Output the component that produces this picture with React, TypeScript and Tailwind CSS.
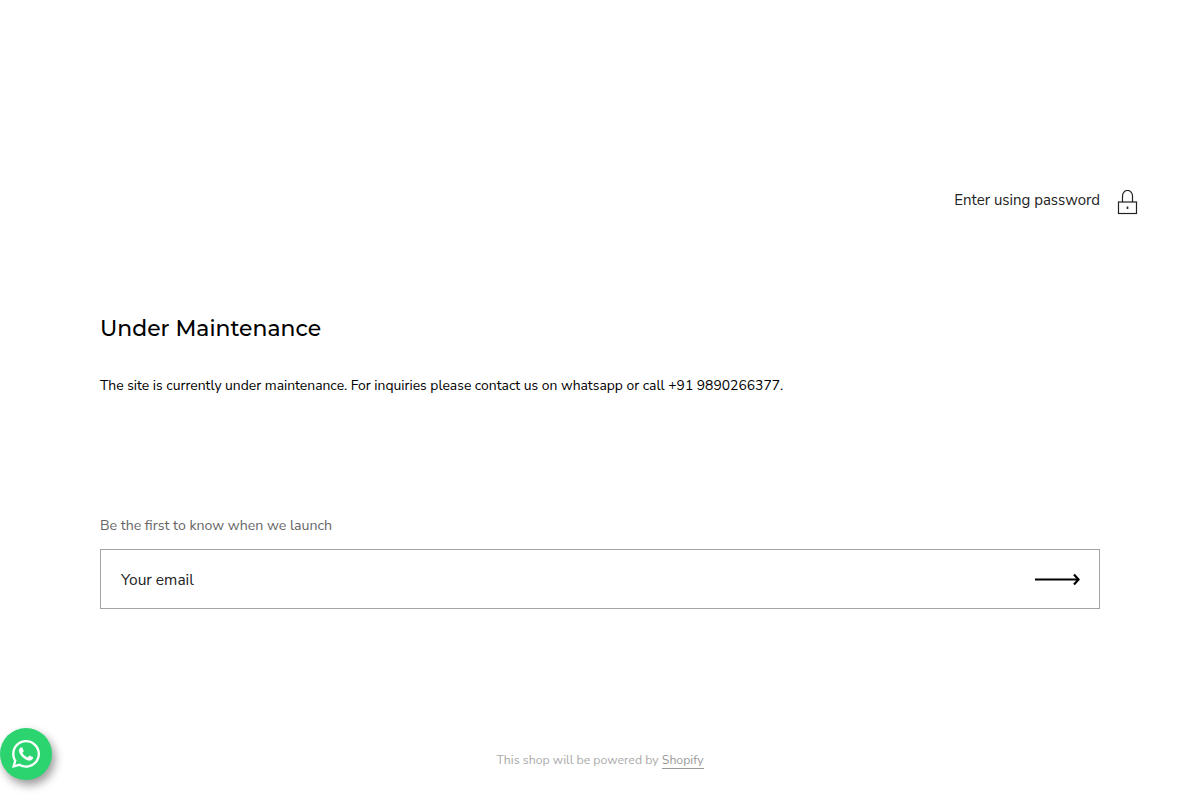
import { FaWhatsapp } from 'react-icons/fa';

const bodyFont = "font-['Nunito_Sans','Lato','Open_Sans',sans-serif]";

function LockIcon() {
  return (
    <svg className="h-[25px] w-[21px] text-[#222]" viewBox="0 0 21 25" fill="none" stroke="currentColor" strokeWidth="1.2">
      <path d="M5.5 12V6a5 5.5 0 0 1 10 0v6" />
      <rect x="1.5" y="12" width="18" height="11.5" />
      <path d="M10.5 16.5v2.5" strokeWidth="1.6" />
    </svg>
  );
}

function ArrowIcon() {
  return (
    <svg className="h-[13px] w-[46px] text-black" viewBox="0 0 46 13" fill="none" stroke="currentColor">
      <path d="M1 6.5h43" strokeWidth="2" />
      <path d="M40 1.5l4.5 5-4.5 5" strokeWidth="2.2" />
    </svg>
  );
}

export default function App() {
  return (
    <div className={`relative flex h-[800px] w-full flex-col overflow-hidden bg-white text-black ${bodyFont}`}>
      {/* Password link */}
      <div className="mt-[190px] flex items-start justify-end gap-[17px] pr-[62px]">
        <span className="text-[15px] leading-[21px] text-[#222]">Enter using password</span>
        <LockIcon />
      </div>

      {/* Message */}
      <div className="mt-[97px] px-[100px]">
        <h1 className="font-['Montserrat','Inter',sans-serif] text-[21.9px] leading-[32px] font-medium">Under Maintenance</h1>
        <p className="mt-[31px] text-[13.88px] leading-[21px]">
          The site is currently under maintenance. For inquiries please contact us on whatsapp or call +91 9890266377.
        </p>
      </div>

      {/* Signup */}
      <div className="mt-[119px] px-[100px]">
        <p className="text-[14.15px] leading-[21px] text-[#666]">Be the first to know when we launch</p>
        <div className="mt-[13px] flex h-[60px] items-center justify-between border border-[#a3a3a3] pr-[19px] pl-[20px]">
          <span className="pt-[1px] text-[15.5px] text-[#222]">Your email</span>
          <ArrowIcon />
        </div>
      </div>

      {/* Footer */}
      <p className="mt-[141px] text-center text-[12.3px] leading-[20px] text-[#aaa]">
        This shop will be powered by <span className="border-b border-[#999] text-[#999]">Shopify</span>
      </p>

      {/* WhatsApp button */}
      <div className="absolute bottom-[20px] left-0 flex h-[52px] w-[52px] items-center justify-center rounded-full bg-[#2bd46f] text-white shadow-[3px_5px_10px_rgba(0,0,0,0.4)]">
        <FaWhatsapp className="h-[32px] w-[32px]" />
      </div>
    </div>
  );
}
